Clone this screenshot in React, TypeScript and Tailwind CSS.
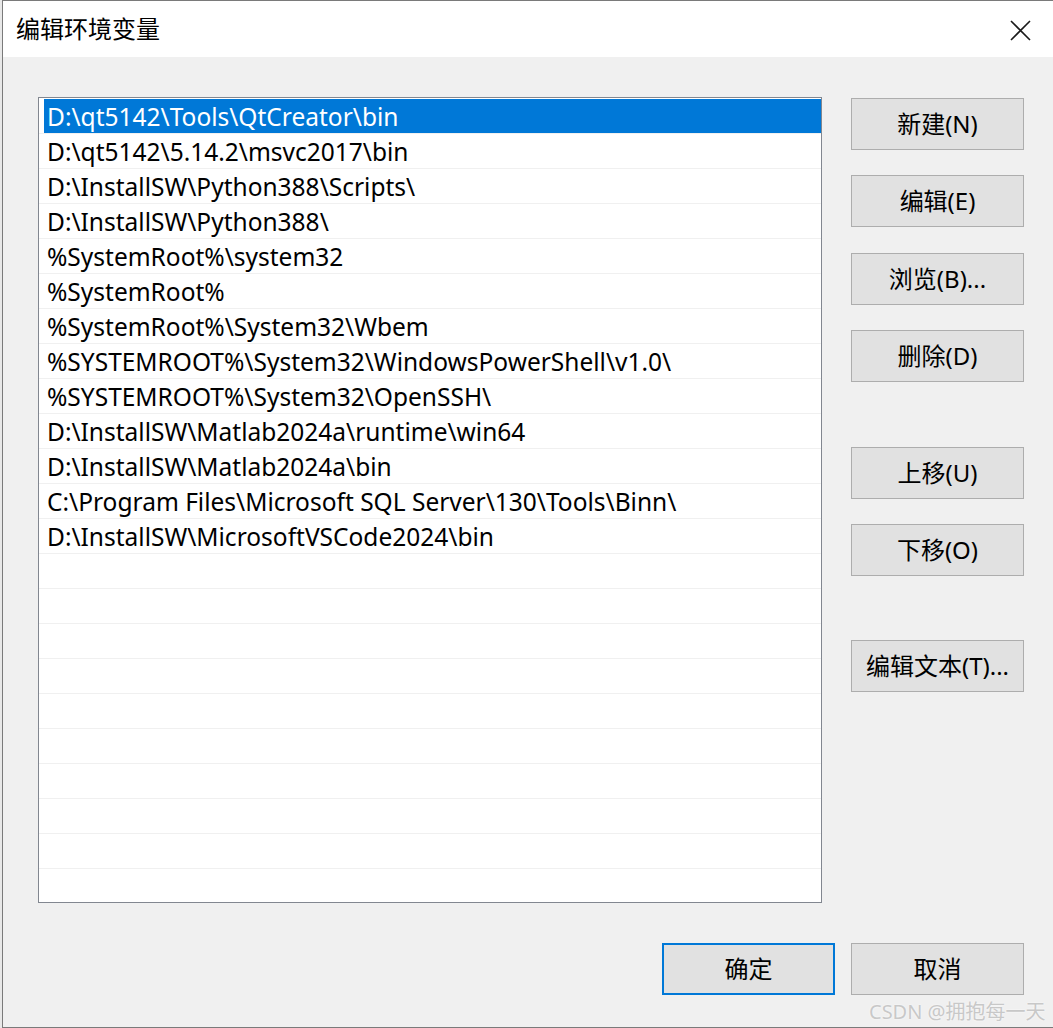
const paths = [
  'D:\\qt5142\\Tools\\QtCreator\\bin',
  'D:\\qt5142\\5.14.2\\msvc2017\\bin',
  'D:\\InstallSW\\Python388\\Scripts\\',
  'D:\\InstallSW\\Python388\\',
  '%SystemRoot%\\system32',
  '%SystemRoot%',
  '%SystemRoot%\\System32\\Wbem',
  '%SYSTEMROOT%\\System32\\WindowsPowerShell\\v1.0\\',
  '%SYSTEMROOT%\\System32\\OpenSSH\\',
  'D:\\InstallSW\\Matlab2024a\\runtime\\win64',
  'D:\\InstallSW\\Matlab2024a\\bin',
  'C:\\Program Files\\Microsoft SQL Server\\130\\Tools\\Binn\\',
  'D:\\InstallSW\\MicrosoftVSCode2024\\bin',
];

// 13 real entries, then empty rows to fill the list box
const rows = [...paths, ...Array(10).fill('')];

const font = { fontFamily: '"Noto Sans", "Noto Sans CJK SC", sans-serif' };

function Button({ label, primary, className }: { label: string; primary?: boolean; className?: string }) {
  return (
    <div
      className={`flex h-[52px] w-[173px] items-center justify-center bg-[#e1e1e1] text-[24px] text-black ${
        primary ? 'border-2 border-[#0078d7]' : 'border border-[#adadad]'
      } ${className ?? ''}`}
    >
      {label}
    </div>
  );
}

export default function App() {
  return (
    <div className="relative flex h-[1028px] w-[1053px] overflow-hidden bg-[#d8d8d8]" style={font}>
      <div className="w-[2px] bg-[#e8e8e8]" />
      <div className="flex flex-1 flex-col border-y border-l border-[#7a7a7a] bg-[#f0f0f0]">
        <div className="flex h-[56px] items-center justify-between bg-white pl-[13px] pr-[22px]">
          <span className="text-[24px] leading-none text-black">编辑环境变量</span>
          <svg width="21" height="21" viewBox="0 0 21 21" className="mt-[2px]">
            <path d="M1 1 L20 20 M20 1 L1 20" stroke="#1a1a1a" strokeWidth="1.6" fill="none" />
          </svg>
        </div>

        <div className="flex pl-[35px] pt-[40px]">
          <div className="h-[806px] w-[784px] overflow-hidden border border-[#828790] bg-white pt-[1px]">
            {rows.map((p, i) => (
              <div key={i} className="h-[35px] border-b border-[#f0f0f0] pl-[1px]">
                <div
                  className={`ml-[4px] flex h-[34px] items-center pl-[3px] pt-[2px] text-[24.5px] leading-none ${
                    i === 0 ? 'bg-[#0078d7] text-white' : 'text-black'
                  }`}
                >
                  {p}
                </div>
              </div>
            ))}
          </div>

          <div className="ml-[29px] mt-[1px] flex flex-col">
            <Button label="新建(N)" />
            <Button label="编辑(E)" className="mt-[25px]" />
            <Button label="浏览(B)..." className="mt-[26px]" />
            <Button label="删除(D)" className="mt-[25px]" />
            <Button label="上移(U)" className="mt-[65px]" />
            <Button label="下移(O)" className="mt-[25px]" />
            <Button label="编辑文本(T)..." className="mt-[64px]" />
          </div>
        </div>

        <div className="flex justify-end gap-[16px] pr-[29px] pt-[40px]">
          <Button label="确定" primary />
          <Button label="取消" />
        </div>
      </div>

      <span
        className="absolute left-[869px] top-[997px] text-[20px] text-[#c8c8c8]"
        style={{ textShadow: '0 0 2px #ffffff' }}
      >
        CSDN @拥抱每一天
      </span>
    </div>
  );
}
